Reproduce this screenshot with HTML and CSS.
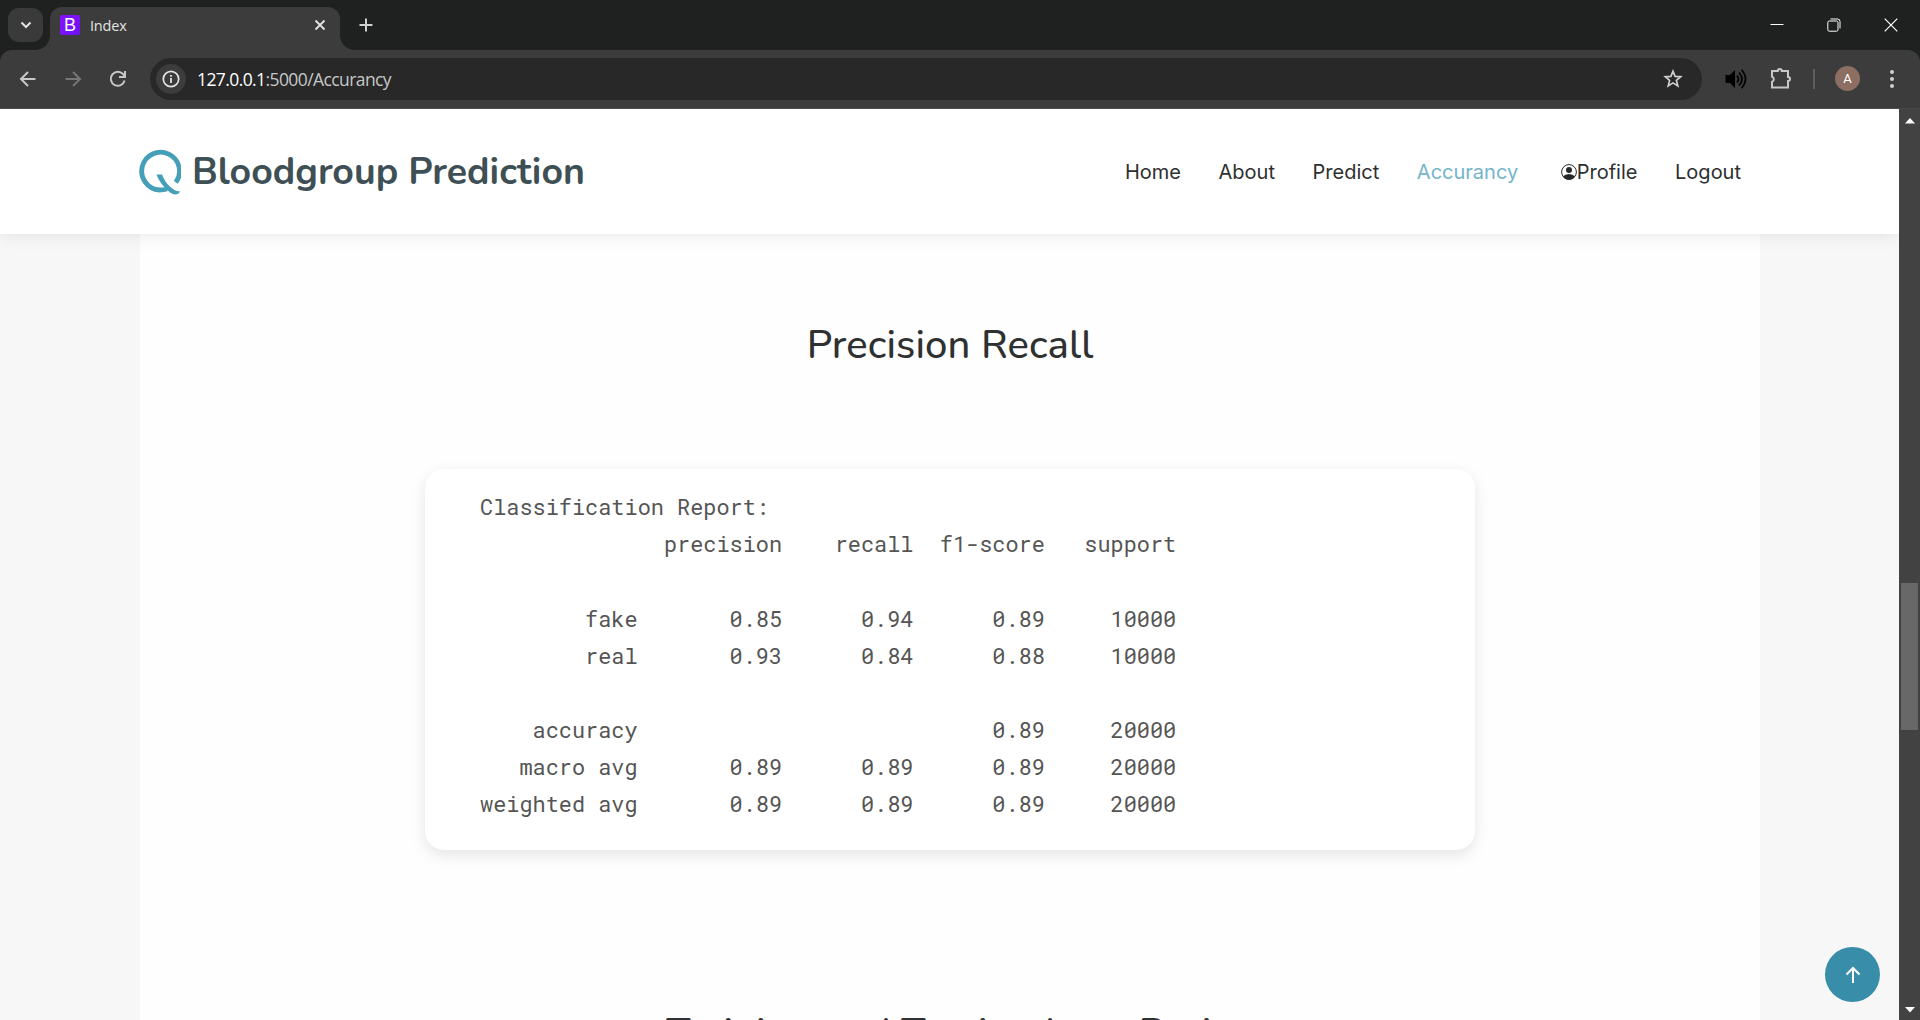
FILE: index.html
```html
<!DOCTYPE html>
<html lang="en">
<head>
<meta charset="utf-8">
<title>Index</title>
<link rel="stylesheet" href="styles.css">
</head>
<body>
<div class="tabstrip">
  <button class="tab-search" aria-label="Search tabs"><svg width="12" height="8" viewBox="0 0 12 8"><path d="M1.5 1.5 6 6l4.500-4.500" fill="none" stroke="#e3e3e3" stroke-width="2"/></svg></button>
  <div class="tab">
    <span class="favicon">B</span>
    <span class="tab-title">Index</span>
    <svg class="tab-close" width="12" height="12" viewBox="0 0 12 12"><path d="M1.500 1.500l9 9m0-9-9 9" stroke="#e3e3e3" stroke-width="1.800"/></svg>
  </div>
  <svg class="new-tab" width="14" height="14" viewBox="0 0 14 14"><path d="M7 .5v13M.5 7h13" stroke="#d0d0d0" stroke-width="2"/></svg>
  <div class="window-controls">
    <svg width="14" height="14" viewBox="0 0 14 14"><path d="M.5 6.500h13" stroke="#fff"/></svg>
    <svg width="14" height="14" viewBox="0 0 14 14" fill="none" stroke="#fff"><rect x=".8" y="3" width="10.200" height="10.200" rx="1.500"/><path d="M3.500 1h7a2.500 2.500 0 0 1 2.500 2.500v7"/></svg>
    <svg width="14" height="14" viewBox="0 0 14 14"><path d="M.7.7l12.600 12.600m0-12.600L.7 13.300" stroke="#fff" stroke-width="1.200"/></svg>
  </div>
</div>
<div class="toolbar">
  <svg class="nav-icon" width="20" height="20" viewBox="0 0 20 20" fill="none" stroke="#c7c7c7" stroke-width="2"><path d="M17.500 10H3.500M10 3l-7 7 7 7"/></svg>
  <svg class="nav-icon" width="20" height="20" viewBox="0 0 20 20" fill="none" stroke="#767676" stroke-width="2"><path d="M2.500 10h14M10 3l7 7-7 7"/></svg>
  <svg class="nav-icon" width="20" height="20" viewBox="0 0 20 20" fill="none" stroke="#c7c7c7" stroke-width="2"><path d="M16.600 11.500A7 7 0 1 1 15 5l1.800 2M17 2v6h-6"/></svg>
  <div class="address">
    <span class="site-info"><svg width="18" height="18" viewBox="0 0 18 18"><circle cx="9" cy="9" r="7.700" fill="none" stroke="#e3e3e3" stroke-width="1.700"/><path d="M9 8v5M9 5v1.800" stroke="#e3e3e3" stroke-width="1.800"/></svg></span>
    <span class="url"><b>127.0.0.1</b>:5000/Accurancy</span>
    <svg class="star" width="20" height="20" viewBox="0 0 20 20"><path d="M10 2.200l2.100 5.200 5.600.4-4.300 3.600 1.400 5.500L10 13.900l-4.800 3 1.400-5.500-4.300-3.600 5.600-.4z" fill="none" stroke="#d0d0d0" stroke-width="1.700"/></svg>
  </div>
  <div class="tools">
    <svg width="22" height="20" viewBox="0 0 22 20"><path d="M.5 6H5l5-5v18l-5-5H.5z" fill="#000"/><path d="M12 6.500q3 3.500 0 7M14 3.500q6 6.500 0 13M16.500.8q8 9.200 0 18.400" fill="none" stroke="#000" stroke-width="1.700"/></svg>
    <svg class="puzzle" width="22" height="22" viewBox="0 0 22 22"><path d="M2 4h5.800a2 2 0 0 1 4 0H18v6a2 2 0 0 1 0 4v6.500H2V15a3 3 0 0 0 0-5.500z" fill="none" stroke="#c7c7c7" stroke-width="2"/></svg>
    <span class="divider"></span>
    <span class="avatar">A</span>
    <svg class="dots" width="4" height="18" viewBox="0 0 4 18" fill="#d0d0d0"><circle cx="2" cy="2" r="2"/><circle cx="2" cy="9" r="2"/><circle cx="2" cy="16" r="2"/></svg>
  </div>
</div>
<div class="viewport">
  <div class="page">
    <header class="header">
      <a class="logo"><svg width="43" height="46" viewBox="0 0 43 46" fill="none" stroke="#459fb9"><path d="M37.800 33.400A18.900 18.900 0 1 0 21.500 41q4 0 7.500-1" stroke-width="4.800"/><path d="M18.500 25.500H24q3 8 8.500 12.500 4 4 9.500 4.500-1.500 3.200-5 3-4-.5-8.500-5.200Q21 33 18.500 25.500z" fill="#459fb9" stroke="none"/></svg><span>Bloodgroup Prediction</span></a>
      <nav class="menu">
        <a>Home</a><a>About</a><a>Predict</a><a class="active">Accurancy</a>
        <a class="profile"><svg width="16" height="16" viewBox="0 0 16 16"><circle cx="8" cy="8" r="7.400" fill="none" stroke="#272829" stroke-width="1"/><circle cx="8" cy="6" r="3" fill="#272829"/><path d="M2 12.500Q4 10 8 10t6 2.500Q12 15.700 8 15.700T2 12.500z" fill="#272829"/></svg>Profile</a><a>Logout</a>
      </nav>
    </header>
    <main class="container">
      <h2>Precision Recall</h2>
      <section class="card"><pre>Classification Report:
              precision    recall  f1-score   support

        fake       0.85      0.94      0.89     10000
        real       0.93      0.84      0.88     10000

    accuracy                           0.89     20000
   macro avg       0.89      0.89      0.89     20000
weighted avg       0.89      0.89      0.89     20000</pre></section>
      <h2 class="next">Training and Testing Loss Ratio</h2>
    </main>
    <a class="scroll-top"><svg width="16" height="18" viewBox="0 0 16 18"><path d="M8 17V2M1.500 8.500 8 2l6.500 6.500" fill="none" stroke="#fff" stroke-width="2"/></svg></a>
  </div>
  <div class="scrollbar">
    <svg width="10" height="6" viewBox="0 0 10 6"><path d="M5 0l5 5.500H0z" fill="#fff"/></svg>
    <span class="thumb"></span>
    <svg class="down" width="10" height="6" viewBox="0 0 10 6"><path d="M5 5.500 0 0h10z" fill="#fff"/></svg>
  </div>
</div>
</body>
</html>
```
FILE: styles.css
```css
* { box-sizing: border-box; }
body { margin: 0; height: 1020px; overflow: hidden; display: flex; flex-direction: column; background: #1f2120; font-family: Inter, sans-serif; }
svg { display: block; flex: none; }

.tabstrip { height: 50px; display: flex; align-items: flex-start; background: #1f2120; }
.tab-search { width: 35px; height: 34px; margin: 8px 7px 0 8px; padding: 0; border: 0; border-radius: 11px; background: #3a3a3a; display: flex; align-items: center; justify-content: center; }
.tab { position: relative; width: 290px; height: 43px; margin-top: 7px; padding: 0 14px 7px 10px; display: flex; align-items: center; border-radius: 12px 12px 0 0; background: #3c3c3c; }
.tab::before, .tab::after { content: ""; position: absolute; bottom: 0; width: 14px; height: 14px; }
.tab::before { left: -14px; background: radial-gradient(circle at 0 0, transparent 13.500px, #3c3c3c 14px); }
.tab::after { right: -14px; background: radial-gradient(circle at 100% 0, transparent 13.500px, #3c3c3c 14px); }
.favicon { width: 20px; height: 20px; border-radius: 2px; background: linear-gradient(135deg, #8a12fb, #6a11f5); color: #fff; font: 18px/21px "Liberation Sans", sans-serif; text-align: center; }
.tab-title { margin-left: 10px; padding-top: 1px; color: #e3e3e3; font: 14.500px/20px "Open Sans", sans-serif; letter-spacing: -.2px; }
.tab-close { margin-left: auto; }
.new-tab { margin: 18px 0 0 19px; }
.window-controls { display: flex; gap: 43px; margin: 18px 22px 0 auto; }

.toolbar { height: 59px; display: flex; align-items: center; padding: 0 20px 1px 18px; background: #3c3c3c; border-bottom: 1px solid #484848; border-radius: 12px 12px 0 0; }
.nav-icon { margin-right: 25px; }
.address { width: 1552px; height: 42px; margin-left: -3px; padding: 0 19px 0 6px; border-radius: 21px; background: #282828; display: flex; align-items: center; }
.site-info { width: 30px; height: 30px; border-radius: 50%; background: #3c3c3c; display: flex; align-items: center; justify-content: center; }
.url { margin-left: 11px; color: #c7c7c7; font: 17.500px/24px "Open Sans", sans-serif; letter-spacing: -.59px; padding-top: 1px; }
.url b { color: #fff; font-weight: 400; }
.star { margin-left: auto; }
.tools { flex: 1; display: flex; align-items: center; margin-left: 23px; }
.puzzle { margin-left: 23px; margin-top: -2px; }
.divider { width: 2px; height: 20px; margin-left: 21px; background: #5e5e5e; }
.avatar { width: 25px; height: 25px; margin-left: 20px; border-radius: 50%; background: #8d6e63; color: #fff; font: 13px/26px Roboto, sans-serif; text-align: center; }
.dots { margin-left: auto; margin-right: 6px; }

.viewport { flex: 1; min-height: 0; display: flex; }
.page { position: relative; width: 1899px; overflow: hidden; background: #f7f7f7; }
.header { position: relative; z-index: 1; height: 125px; padding: 0 158px 0 138px; display: flex; align-items: center; justify-content: space-between; background: #fff; box-shadow: 0 0 18px rgba(0, 0, 0, .1); }
.logo { display: flex; align-items: center; color: #3e5055; font: 700 37.500px/44px Nunito, Lato, sans-serif; }
.logo span { margin-left: 11px; }
.menu { display: flex; color: #2e2f30; font-size: 20px; line-height: 30px; gap: 37.600px; }
.menu .active { color: #74b5cc; }
.profile { display: flex; align-items: center; margin-left: 5px; }
.container { width: 1620px; height: 800px; margin: 0 auto 0 140px; background: #fefefe; display: flex; flex-direction: column; align-items: center; }
h2 { flex: none; margin: 87px 0 0; color: #2f3031; font: 500 40px/48px Nunito, Lato, sans-serif; letter-spacing: .1px; white-space: nowrap; }
.card { flex: none; width: 1050px; height: 381px; margin-top: 100px; padding: 19px 55px; border-radius: 19px; background: #fff; box-shadow: 0 5px 15px rgba(0, 0, 0, .1); }
pre { margin: 0; color: #555; font: 21.900px/37.170px "Roboto Mono", "DejaVu Sans Mono", monospace; }
h2.next { margin-top: 159px; }
.scroll-top { position: absolute; right: 19px; bottom: 18px; width: 55px; height: 55px; border-radius: 50%; background: #388da8; display: flex; align-items: center; justify-content: center; }
.scrollbar { width: 21px; display: flex; flex-direction: column; align-items: center; padding: 9px 0 7px; background: #424242; }
.thumb { width: 17px; height: 147px; margin-top: 459px; background: #686868; }
.down { margin-top: auto; }
```
